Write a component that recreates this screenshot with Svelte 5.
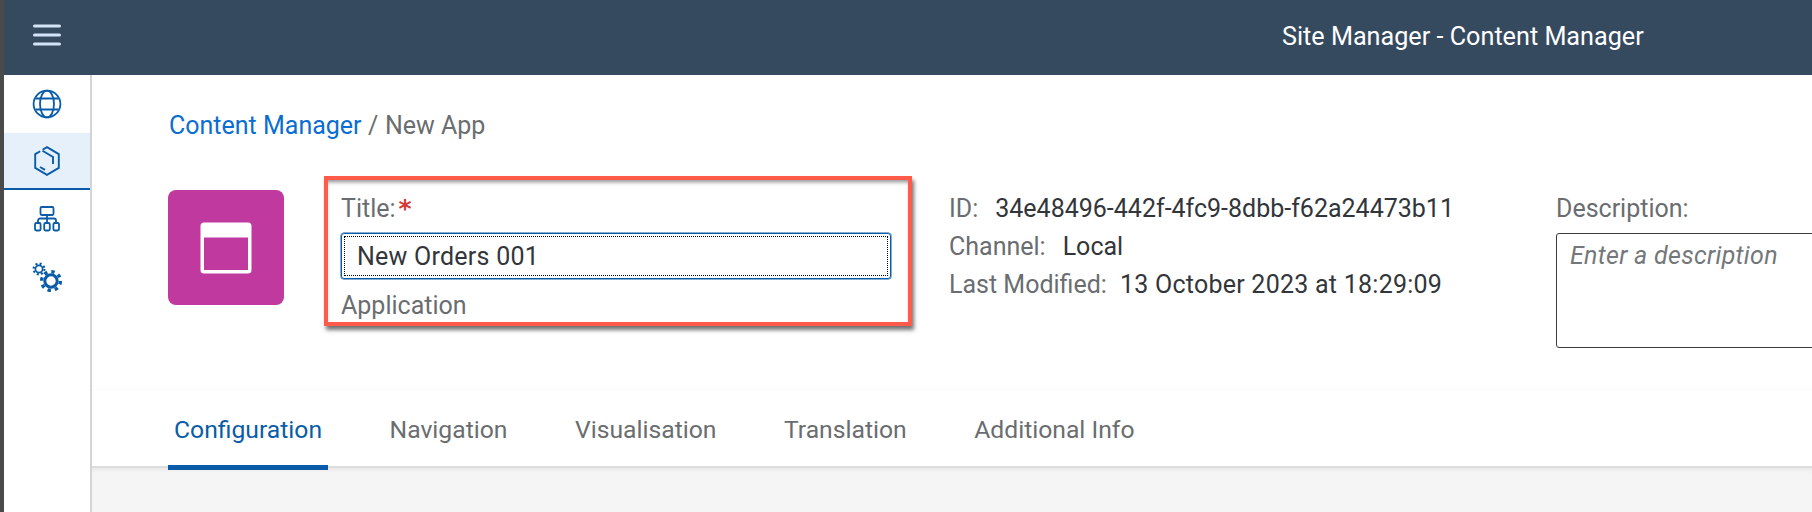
<script>
  const tabs = ['Configuration', 'Navigation', 'Visualisation', 'Translation', 'Additional Info'];
</script>

<div class="page">
  <div class="strip"></div>
  <div class="shell">
    <header class="topbar">
      <button class="menu" aria-label="Menu">
        <svg width="28" height="24" viewBox="0 0 28 24"><path d="M1.500 3h25M1.500 12h25M1.500 21h25" stroke="#d3e4f8" stroke-width="3" stroke-linecap="round" fill="none"/></svg>
      </button>
      <div class="apptitle">Site Manager - Content Manager</div>
    </header>
    <div class="body">
      <nav class="side">
        <div class="item">
          <svg width="30" height="30" viewBox="0 0 30 30" fill="none" stroke="#0a5ca8" stroke-width="1.800"><circle cx="15" cy="15" r="13.400"/><ellipse cx="15" cy="15" rx="7" ry="13.400"/><path d="M3.500 9.500h23M3.500 20.500h23"/></svg>
        </div>
        <div class="item active">
          <svg width="26" height="30" viewBox="0 0 26 30" fill="none" stroke="#0a5ca8" stroke-width="1.900"><path d="M8.600 3.800 13 1.200l11.800 6.900v13.800L13 28.800 1.200 21.900V8.100l5-2.900"/><path d="M8.500 4.800 19 11v7"/><path d="M6 21l5 2.800"/></svg>
        </div>
        <div class="item">
          <svg width="26" height="26" viewBox="0 0 26 26" fill="none" stroke="#0a5ca8" stroke-width="1.800"><rect x="6.500" y="1" width="13" height="8" rx="1.200"/><path d="M13 9v7M4 16v-1.500a2 2 0 0 1 2-2h14a2 2 0 0 1 2 2V16"/><rect x="1" y="17" width="5.600" height="7.500" rx="1.400"/><rect x="10.200" y="17" width="5.600" height="7.500" rx="1.400"/><rect x="19.400" y="17" width="5.600" height="7.500" rx="1.400"/></svg>
        </div>
        <div class="item">
          <svg width="30" height="30" viewBox="0 0 30 30" fill="none" stroke="#0a5ca8">
            <circle cx="7" cy="7" r="3.600" stroke-width="1.700"/>
            <circle cx="7" cy="7" r="5.400" stroke-width="2.200" stroke-dasharray="2 2.240"/>
            <circle cx="19" cy="19" r="6.200" stroke-width="3"/>
            <circle cx="19" cy="19" r="9.400" stroke-width="3.400" stroke-dasharray="3.400 3.980"/>
          </svg>
        </div>
      </nav>
      <main class="main">
        <section class="head">
          <div class="crumbs"><span class="link">Content Manager</span><span class="sep">/</span><span class="cur">New App</span></div>
          <div class="row">
            <div class="tile">
              <svg width="52" height="52" viewBox="0 0 52 52"><path fill-rule="evenodd" fill="#fff" d="M4 .5h44a3.500 3.500 0 0 1 3.500 3.500v44a3.500 3.500 0 0 1-3.500 3.500H4A3.500 3.500 0 0 1 .5 48V4A3.500 3.500 0 0 1 4 .5ZM4 15.500V48h44V15.500Z"/></svg>
            </div>
            <div class="marked">
              <div class="title-label">Title:<span class="req">*</span></div>
              <div class="input"><div class="dots">New Orders 001</div></div>
              <div class="type">Application</div>
            </div>
            <div class="meta">
              <div><span class="k">ID:</span><span class="v">34e48496-442f-4fc9-8dbb-f62a24473b11</span></div>
              <div><span class="k">Channel:</span><span class="v">Local</span></div>
              <div><span class="k">Last Modified:</span><span class="v date">13 October 2023 at 18:29:09</span></div>
            </div>
            <div class="desc">
              <div class="k dl">Description:</div>
              <div class="area">Enter a description</div>
            </div>
          </div>
        </section>
        <div class="tabs">
          {#each tabs as t, i}
            <div class="tab" class:sel={i === 0}>{t}</div>
          {/each}
        </div>
        <div class="content"></div>
      </main>
    </div>
  </div>
</div>

<style>
  :global(body) { margin: 0; background: #fff; overflow: hidden; }
  .page { display: flex; width: 1812px; height: 512px; font-family: Roboto, "Noto Sans", sans-serif; font-size: 25px; overflow: hidden; }
  .strip { width: 4px; flex: none; background: #4a4a4a; }
  .shell { flex: 1; min-width: 0; display: flex; flex-direction: column; }
  .topbar { height: 75px; flex: none; background: #364a5f; display: flex; align-items: center; }
  .menu { background: none; border: 0; padding: 0; margin: -6px 0 0 29px; display: flex; }
  .apptitle { margin-left: 1221px; margin-top: -2px; color: #fff; white-space: nowrap; font-size: 25.2px; }
  .body { flex: 1; display: flex; min-height: 0; }
  .side { width: 86px; flex: none; border-right: 2px solid #d4d4d4; }
  .item { height: 58px; display: flex; align-items: center; justify-content: center; box-sizing: border-box; }
  .item.active { background: #e5f0fa; border-bottom: 2px solid #0a5ca8; height: 57px; }
  .main { flex: 1; min-width: 0; display: flex; flex-direction: column; }
  .head { height: 314px; flex: none; padding: 37px 0 0 76px; box-sizing: border-box; }
  .crumbs { line-height: 28px; color: #6a6d70; white-space: nowrap; padding-left: 1px; }
  .link { color: #0a6ed1; }
  .sep { margin: 0 6.500px; }
  .row { display: flex; align-items: flex-start; margin-top: 36px; }
  .tile { width: 116px; height: 115px; flex: none; margin-top: 14px; background: #c0399f; border-radius: 8px; display: flex; align-items: center; justify-content: center; }
  .marked { width: 588px; height: 150px; flex: none; margin-left: 40px; box-sizing: border-box; border: 4px solid #ff5a4a; padding: 14px 0 0 13px; box-shadow: 2px 4px 4px rgba(0,0,0,.55), inset 0 4px 4px -2px rgba(0,0,0,.45); color: #6a6d70; }
  .title-label { line-height: 30px; height: 39px; white-space: nowrap; }
  .req { color: #cf3a34; font-family: "DejaVu Sans", sans-serif; font-weight: 700; font-size: 25px; line-height: 20px; margin-left: 3px; }
  .input { width: 550px; height: 46px; box-sizing: border-box; border: 1px solid #0a5ca8; box-shadow: 0 0 0 .5px #0a5ca8; border-radius: 3px; padding: 2px; }
  .dots { height: 100%; box-sizing: border-box; border: 1px dotted #000; padding-left: 12px; color: #32363a; line-height: 40px; white-space: nowrap; letter-spacing: .25px; }
  .type { margin-top: 12px; line-height: 30px; }
  .meta { width: 607px; flex: none; margin-left: 37px; padding-top: 14px; line-height: 38px; white-space: nowrap; }
  .k { color: #6a6d70; }
  .v { color: #32363a; margin-left: 17px; }
  .v.date { letter-spacing: .25px; margin-left: 13px; }
  .desc { flex: 1; padding-top: 18px; white-space: nowrap; }
  .dl { line-height: 30px; height: 39px; }
  .area { height: 115px; width: 400px; box-sizing: border-box; border: 1.500px solid #3a3d40; border-radius: 3px; padding: 8px 13px; font-style: italic; color: #74777a; line-height: 28px; letter-spacing: .3px; }
  .tabs { height: 79px; flex: none; padding-left: 76px; display: flex; background: #fff; border-top: 1px solid #fafafa; border-bottom: 2px solid #dcdcdc; box-sizing: border-box; position: relative; z-index: 1; font-size: 24.700px; }
  .tab { padding: 0 6px; margin-right: 55.500px; color: #6a6d70; line-height: 79px; height: 80px; box-sizing: border-box; white-space: nowrap; }
  .tab.sel { color: #0a5ca8; border-bottom: 5px solid #0a5ca8; border-radius: 4px 4px 0 0; }
  .content { flex: 1; background: #f5f5f5; box-shadow: inset 0 5px 5px -4px rgba(0,0,0,.08); }
</style>
